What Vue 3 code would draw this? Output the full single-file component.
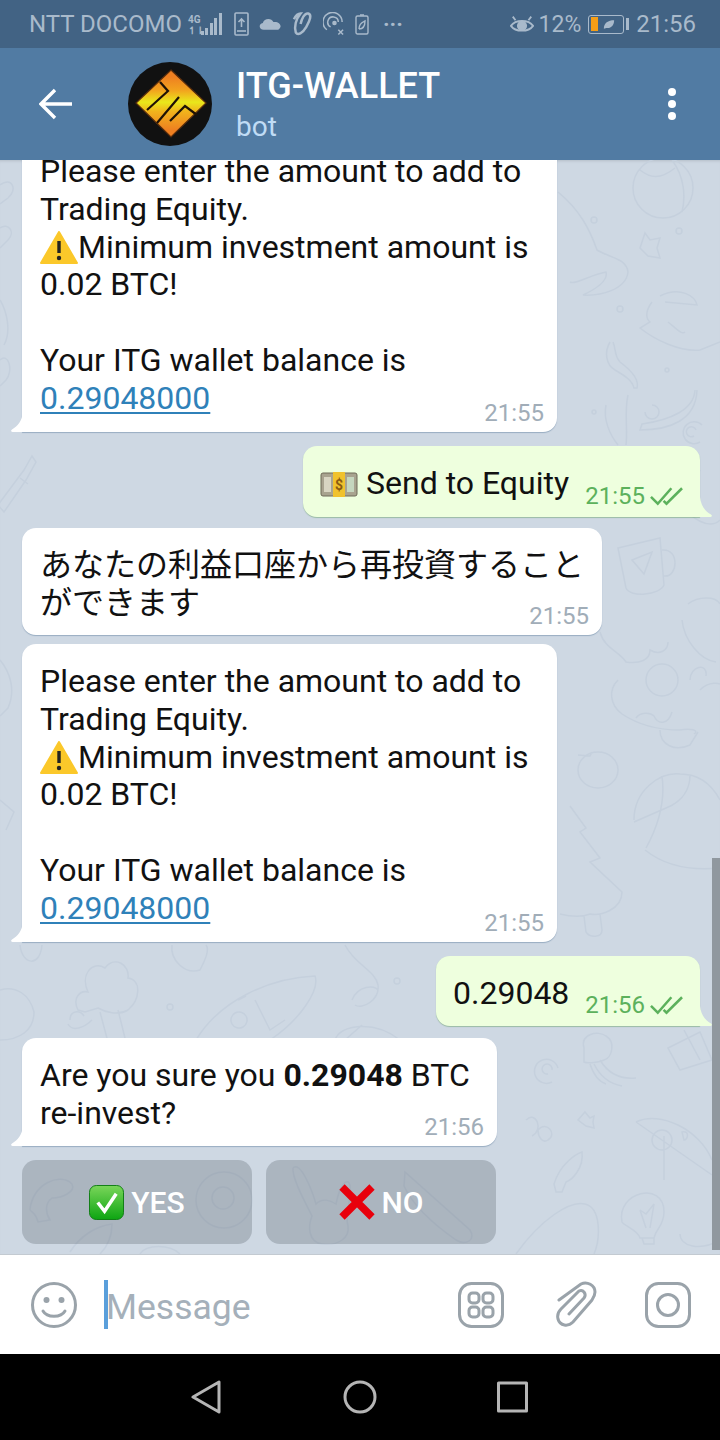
<script setup>
// wallpaper doodles, in page coordinates
const doodles = [
  // top right: ball, star, dino, jar, squiggles
  'M633 188 A30 30 0 1 1 693 188 A30 30 0 1 1 633 188 M640 170 C650 178 660 180 675 168 M672 160 C684 176 686 196 682 212',
  'M645 233 L650 240 L660 238 L657 248 L660 258 L648 256 L640 248 Z',
  'M558 192 C580 210 590 230 597 250 C610 258 626 258 628 272 C626 290 600 296 583 295 C598 288 608 280 606 272 C590 275 575 285 570 282',
  'M660 296 C680 286 695 296 697 305 L665 302 M652 302 C646 310 645 318 650 322 L640 328 C655 340 680 352 700 350 L720 342 M668 322 C678 330 682 335 685 332',
  'M610 342 C604 352 606 365 615 370 C625 376 632 380 634 388 L637 388 C640 378 628 368 620 362 C614 356 616 348 613 342',
  'M695 390 C694 410 670 420 642 424 L640 430 C670 430 696 420 697 390',
  'M700 442 A11 11 0 1 1 702 425 M694 436 A5 5 0 1 1 696 430',
  'M645 412 A7 7 0 1 0 652 405',
  'M606 405 C603 420 610 435 618 445 M628 395 C624 412 628 430 626 445',
  // dots
  'M591 220 a3 3 0 1 0 6 0 a3 3 0 1 0 -6 0 M676 231 a3 3 0 1 0 6 0 a3 3 0 1 0 -6 0 M617 309 a3 3 0 1 0 6 0 a3 3 0 1 0 -6 0 M665 370 a2 2 0 1 0 4 0 a2 2 0 1 0 -4 0 M592 412 a2 2 0 1 0 4 0 a2 2 0 1 0 -4 0',
  // left edge
  'M0 185 C12 176 18 190 8 198 L0 204 M0 228 C8 222 16 232 8 240 L0 248 M0 360 C8 352 14 370 6 380 L0 386',
  'M-2 505 L24 470 L32 456 L36 462 L26 480 L4 512 Z M20 478 L28 484',
  'M0 300 C6 310 12 330 4 345 M0 660 C10 672 16 690 8 708 L0 716 M0 800 L14 812 L6 830',
  // mid right: cup, strawberry
  'M618 548 L660 538 L664 585 C660 595 630 598 626 588 Z M662 550 C680 548 678 578 664 576 M632 560 L652 552 L644 574 Z',
  'M688 604 C698 596 716 596 720 604 M682 620 C684 640 700 660 716 662',
  'M636 500 C660 510 680 500 700 470 M680 500 C690 520 710 530 720 520',
  // donut creature, peach, ball, tree
  'M600 632 C604 648 620 652 626 662 C640 664 650 660 650 650 C660 656 668 650 668 642 M618 680 C608 690 610 705 622 714 C640 726 660 730 680 730 C690 728 700 730 694 734',
  'M646 680 A16 16 0 1 1 678 680 A16 16 0 1 1 646 680 M690 680 C690 666 708 662 706 676 M700 690 C710 680 720 684 720 684',
  'M636 718 C640 712 650 712 654 716 C658 725 668 725 672 712 M660 730 C660 745 675 752 690 745 L698 732',
  'M578 770 A20 18 0 1 1 618 770 A20 18 0 1 1 578 770 M578 755 L590 756 L592 752',
  'M634 820 C634 790 660 772 680 774 C700 774 712 785 720 800 M634 822 L666 808 C686 800 690 785 690 775 M662 776 C664 790 664 815 646 848 M645 850 C670 870 700 870 720 868',
  'M570 806 L586 828 L580 832 L600 858 L590 862 L622 892 C622 910 600 916 590 914 C580 918 568 916 560 914 M584 916 L586 932 C590 938 602 938 602 930 L600 914',
  // below the wallet bubble: cloud tree, rocket, planet
  'M78 1010 C72 998 80 990 88 992 C80 975 92 960 105 968 C115 955 130 965 128 978 C142 980 140 1000 128 1010 C118 1016 105 1012 98 1008 L85 1012 Z M100 1012 L108 1042 M118 1010 L126 1042',
  'M70 1020 C70 1010 80 1010 84 1016 M68 1024 C72 1032 84 1028 92 1020',
  'M196 1040 C220 1000 270 978 315 976 C320 990 300 1020 270 1040 M238 1000 L246 996 M232 1024 A7 7 0 1 1 246 1016 A7 7 0 1 1 232 1024 M255 1000 L270 1030 L285 1020',
  'M0 990 C16 985 30 995 34 1012 C34 1030 20 1040 0 1040',
  'M20 945 C22 965 40 968 42 945 M172 945 C170 960 185 975 200 970 C205 960 210 950 206 945',
  'M345 945 C355 965 375 970 378 985 C380 1000 362 1010 355 1005 M352 1000 C358 985 375 985 378 990 M362 1025 L345 1040 M335 1040 C340 1024 375 1020 400 1040',
  'M167 1007 a3 3 0 1 0 6 0 a3 3 0 1 0 -6 0 M394 981 a3 3 0 1 0 6 0 a3 3 0 1 0 -6 0',
  // jellyfish, swirl, star, pizza
  'M584 1048 C580 1034 598 1030 606 1036 C616 1042 612 1058 604 1060 C600 1062 588 1064 584 1062 Z M600 1060 C606 1070 616 1080 636 1078 M594 1064 C600 1076 610 1084 622 1086 M590 1064 C594 1076 600 1082 606 1084',
  'M552 1082 A12 12 0 1 1 558 1068 M548 1074 A5 5 0 1 1 552 1070',
  'M585 1112 L590 1118 L594 1116 L593 1122 L594 1128 L586 1126 L578 1120 Z',
  'M636 1122 C660 1110 700 1130 712 1160 M636 1122 L712 1175 M652 1140 A10 10 0 1 0 672 1140 A10 10 0 1 0 652 1140 M664 1136 L664 1180 M682 1132 C690 1130 688 1140 684 1140 Z',
  'M668 1048 L700 1032 L712 1060 L680 1070 Z M684 1030 L700 1060',
  // bottom: doodles seen through the keyboard
  'M526 1120 C536 1110 544 1130 532 1136 M538 1130 C546 1120 558 1134 548 1140 C542 1144 538 1136 538 1130',
  'M554 1184 C560 1164 576 1154 582 1152 C584 1168 572 1180 566 1182 L562 1192 L556 1192 Z',
  'M622 1222 C616 1192 664 1180 664 1212 C664 1226 656 1228 654 1238 L640 1238 C638 1230 624 1226 622 1222 M642 1238 L654 1238 L654 1244 L644 1244 Z M640 1210 L646 1228 M654 1204 L650 1228 M640 1210 L646 1214 L654 1204',
  'M516 1254 C540 1220 570 1200 585 1204 C602 1208 600 1240 594 1254',
  'M30 1210 C32 1184 60 1172 72 1184 C76 1192 62 1198 52 1198 C44 1204 46 1214 50 1220 L38 1222 C36 1214 34 1214 30 1210',
  'M196 1200 A28 28 0 1 1 252 1200 A28 28 0 1 1 196 1200 M212 1198 A10 10 0 1 1 234 1198 A10 10 0 1 1 212 1198',
  'M293 1168 C300 1160 312 1190 316 1204 C322 1198 330 1200 336 1204 C340 1184 348 1176 350 1186 C352 1200 344 1214 348 1226 C350 1238 338 1246 322 1244 C308 1242 308 1226 312 1216 C304 1200 292 1178 293 1168',
  'M405 1172 L470 1230 C476 1240 466 1246 456 1240 C436 1226 414 1208 404 1186 Z',
  'M70 1252 C80 1236 96 1226 112 1224 C112 1240 106 1248 100 1254 M140 1254 C146 1244 170 1244 180 1254',
  'M680 1234 C680 1246 700 1252 720 1240'
]
</script>

<template>
  <div class="phone">
    <div class="statusbar">
      <div class="status-left">
        <span class="carrier">NTT DOCOMO</span>
        <span class="net">
          <span class="net-type">4G<br>↿⇂</span>
          <svg width="22" height="24" viewBox="0 0 22 24" fill="#a9bacb">
            <rect x="1" y="19" width="3" height="4" /><rect x="5" y="16" width="3" height="7" />
            <rect x="10" y="11" width="3" height="12" /><rect x="14" y="6" width="3" height="17" />
            <rect x="19" y="1" width="3" height="22" />
          </svg>
        </span>
        <svg width="15" height="24" viewBox="0 0 15 24" fill="none" stroke="#a9bacb" stroke-width="1.6">
          <rect x="1" y="1" width="13" height="22" rx="1" />
          <path d="M7.5 15 V7 M4.5 10 L7.5 7 L10.5 10" />
          <path d="M3 19 H12" />
        </svg>
        <svg width="23" height="14" viewBox="0 0 24 14" fill="#a9bacb">
          <path d="M5 13 C0 13 -1 7 4 6 C5 1 13 0 15 5 C20 4 24 8 22 11 C21 13 20 13 19 13 Z" />
        </svg>
        <svg width="21" height="26" viewBox="0 0 22 26" fill="none" stroke="#a9bacb" stroke-width="2.6">
          <path d="M2 8 C4 4 7 2 9 2 C4 8 2 16 4 22 C6 25 11 23 15 16 C19 9 21 3 17 2 C13 1 10 8 9 13" />
        </svg>
        <svg width="22" height="24" viewBox="0 0 23 24" fill="none" stroke="#a9bacb" stroke-width="1.6">
          <path d="M4 18 A10 10 0 1 1 20 10 M8 15 A5.5 5.5 0 1 1 16 10" />
          <circle cx="12" cy="11" r="1.6" fill="#a9bacb" />
          <path d="M16 18 L21 23 M21 18 L16 23" />
        </svg>
        <svg width="14" height="22" viewBox="0 0 14 22" fill="none" stroke="#a9bacb" stroke-width="1.4">
          <rect x="1" y="3" width="12" height="18" rx="1.5" />
          <path d="M5 2 H9 M4 16 C4 10 8 9 10 8 C10 13 8 16 4 16" />
        </svg>
        <span class="more">···</span>
      </div>
      <div class="status-right">
        <svg width="24" height="22" viewBox="0 0 26 22" fill="none" stroke="#a9bacb" stroke-width="2">
          <path d="M1 13 C6 6 20 6 25 13 C20 20 6 20 1 13 Z" />
          <circle cx="13" cy="13" r="4.5" fill="#a9bacb" />
          <path d="M3 3 L6 7 M23 3 L20 7" />
        </svg>
        <span class="pct">12%</span>
        <span class="battery">
          <span class="battery-fill"></span>
          <svg width="12" height="11" viewBox="0 0 14 12" fill="#a9bacb">
            <path d="M1 11 C1 4 6 1 13 1 C13 7 9 11 4 10 Z" />
          </svg>
        </span>
        <span class="battery-cap"></span>
        <span class="clock">21:56</span>
      </div>
    </div>

    <header class="topbar">
      <svg class="back" width="34" height="32" viewBox="0 0 34 32" fill="none" stroke="#fff" stroke-width="3.4">
        <path d="M33 16 H3 M16 2 L2 16 L16 30" />
      </svg>
      <svg class="avatar" width="84" height="84" viewBox="0 0 84 84">
        <defs>
          <linearGradient id="logo" x1="0" y1="0" x2="0" y2="1">
            <stop offset="0.1" stop-color="#ee7f21" />
            <stop offset="0.3" stop-color="#f2a21e" />
            <stop offset="0.48" stop-color="#e9e81b" />
            <stop offset="0.62" stop-color="#f1b31c" />
            <stop offset="0.9" stop-color="#ee7f21" />
          </linearGradient>
        </defs>
        <circle cx="42" cy="42" r="42" fill="#111" />
        <path d="M43 8 L78 41 L43 75 L8 41 Z" fill="url(#logo)" stroke="#5a2d0c" stroke-width="1.2" />
        <path d="M19 48 L40 29 L32 20 M29 61 L51 35 M42 59 L57 44 L69 53" fill="none" stroke="#1e1206" stroke-width="2.2" />
      </svg>
      <div class="title-block">
        <div class="title">ITG-WALLET</div>
        <div class="subtitle">bot</div>
      </div>
      <div class="dots"><i></i><i></i><i></i></div>
    </header>

    <main class="chat">
      <svg class="doodles" width="720" height="1094" viewBox="0 160 720 1094" fill="none" stroke="#c5d0dd" stroke-width="1.5">
        <path v-for="(d, i) in doodles" :key="i" :d="d" />
      </svg>
      <div class="scrollbar"></div>

      <div class="messages">
        <div class="bubble in long">
          <svg class="tail" width="12" height="20" viewBox="0 0 12 20"><path d="M12 0 V20 H1.5 C0 20 -0.5 18.5 1 17.5 C7 14 11 9 12 0 Z" fill="#fff" /></svg>
          <div>Please enter the amount to add to<br>Trading Equity.</div>
          <div class="warn-line">
            <svg class="emoji" width="38" height="33" viewBox="0 0 38 33">
              <path d="M19 1 L37 32 H1 Z" fill="#fbc82a" stroke="#fbc82a" stroke-width="2" stroke-linejoin="round" />
              <path d="M19 10 V22" stroke="#222" stroke-width="3.4" />
              <circle cx="19" cy="27" r="2.2" fill="#222" />
            </svg>Minimum investment amount is
          </div>
          <div>0.02 BTC!</div>
          <div class="blank"></div>
          <div>Your ITG wallet balance is</div>
          <a class="link">0.29048000</a>
          <span class="time">21:55</span>
        </div>

        <div class="bubble out send">
          <svg class="emoji cash" width="38" height="28" viewBox="0 0 38 28">
            <rect x="1" y="3" width="36" height="23" rx="2" fill="#a8a38f" stroke="#6f6a58" />
            <rect x="4" y="7" width="7" height="15" fill="#d8d5c2" />
            <rect x="27" y="7" width="7" height="15" fill="#c5d6be" />
            <rect x="13" y="2" width="12" height="25" fill="#f0c22d" />
            <text x="19" y="20" font-size="14" font-family="Roboto" font-weight="700" text-anchor="middle" fill="#8a5a10">$</text>
          </svg>
          <span>Send to Equity</span>
          <span class="time">21:55
            <svg width="33" height="20" viewBox="0 0 34 20" fill="none" stroke="#5cb15c" stroke-width="2.6">
              <path d="M1 11 L8 18 L22 2 M14 15 L17 18 L33 2" />
            </svg>
          </span>
          <svg class="tail" width="12" height="20" viewBox="0 0 12 20"><path d="M0 0 V20 H10.5 C12 20 12.5 18.5 11 17.5 C5 14 1 9 0 0 Z" fill="#eeffde" /></svg>
        </div>

        <div class="bubble in jp">
          <div>あなたの利益口座から再投資すること<br>ができます</div>
          <span class="time">21:55</span>
        </div>

        <div class="bubble in long second">
          <svg class="tail" width="12" height="20" viewBox="0 0 12 20"><path d="M12 0 V20 H1.5 C0 20 -0.5 18.5 1 17.5 C7 14 11 9 12 0 Z" fill="#fff" /></svg>
          <div>Please enter the amount to add to<br>Trading Equity.</div>
          <div class="warn-line">
            <svg class="emoji" width="38" height="33" viewBox="0 0 38 33">
              <path d="M19 1 L37 32 H1 Z" fill="#fbc82a" stroke="#fbc82a" stroke-width="2" stroke-linejoin="round" />
              <path d="M19 10 V22" stroke="#222" stroke-width="3.4" />
              <circle cx="19" cy="27" r="2.2" fill="#222" />
            </svg>Minimum investment amount is
          </div>
          <div>0.02 BTC!</div>
          <div class="blank"></div>
          <div>Your ITG wallet balance is</div>
          <a class="link">0.29048000</a>
          <span class="time">21:55</span>
        </div>

        <div class="bubble out amount">
          <span>0.29048</span>
          <span class="time">21:56
            <svg width="33" height="20" viewBox="0 0 34 20" fill="none" stroke="#5cb15c" stroke-width="2.6">
              <path d="M1 11 L8 18 L22 2 M14 15 L17 18 L33 2" />
            </svg>
          </span>
          <svg class="tail" width="12" height="20" viewBox="0 0 12 20"><path d="M0 0 V20 H10.5 C12 20 12.5 18.5 11 17.5 C5 14 1 9 0 0 Z" fill="#eeffde" /></svg>
        </div>

        <div class="bubble in confirm">
          <svg class="tail" width="12" height="20" viewBox="0 0 12 20"><path d="M12 0 V20 H1.5 C0 20 -0.5 18.5 1 17.5 C7 14 11 9 12 0 Z" fill="#fff" /></svg>
          <div>Are you sure you <b>0.29048</b> BTC<br>re-invest?</div>
          <span class="time">21:56</span>
        </div>

        <div class="keyboard">
          <button class="kb-btn">
            <svg width="35" height="35" viewBox="0 0 36 36">
              <defs>
                <linearGradient id="tick" x1="0" y1="0" x2="0" y2="1">
                  <stop offset="0" stop-color="#7ad65a" />
                  <stop offset="1" stop-color="#0da512" />
                </linearGradient>
              </defs>
              <rect x="0.5" y="0.5" width="35" height="35" rx="7" fill="url(#tick)" stroke="#0f7d14" />
              <path d="M9 18 L16 27 L28 9" fill="none" stroke="#fff" stroke-width="3.6" />
            </svg>
            YES
          </button>
          <button class="kb-btn">
            <svg width="36" height="36" viewBox="0 0 36 36" stroke="#e8000c" stroke-width="7.5">
              <path d="M3 3 L33 33 M33 3 L3 33" />
            </svg>
            NO
          </button>
        </div>
      </div>
    </main>

    <footer class="composer">
      <svg class="ic smile" width="48" height="48" viewBox="0 0 48 48" fill="none" stroke="#9aa3aa" stroke-width="3">
        <circle cx="24" cy="24" r="21.5" />
        <path d="M13 30 C17 37 31 37 35 30" stroke-linecap="round" />
        <circle cx="16.5" cy="19" r="3" fill="#9aa3aa" stroke="none" />
        <circle cx="31.5" cy="19" r="3" fill="#9aa3aa" stroke="none" />
      </svg>
      <div class="input"><span class="caret"></span><span class="placeholder">Message</span></div>
      <svg class="ic" width="46" height="46" viewBox="0 0 46 46" fill="none" stroke="#9aa3aa" stroke-width="3">
        <rect x="1.5" y="1.5" width="43" height="43" rx="12" />
        <rect x="11" y="11" width="10" height="10" rx="3.5" /><rect x="25" y="11" width="10" height="10" rx="3.5" />
        <rect x="11" y="25" width="10" height="10" rx="3.5" /><rect x="25" y="25" width="10" height="10" rx="3.5" />
      </svg>
      <svg class="ic clip" width="41" height="47" viewBox="0 0 41 47" fill="none" stroke="#9aa3aa" stroke-width="3" stroke-linecap="round">
        <path d="M3 19 L25 3 C31 0 39 4 39 11 C39 14 38 16 36 19 L17 41 C12 46 4 45 2 38 C1 34 2 31 5 28 L23 10 C27 8 31 13 28 17 L13 33" />
      </svg>
      <svg class="ic" width="46" height="46" viewBox="0 0 46 46" fill="none" stroke="#9aa3aa" stroke-width="3">
        <rect x="1.5" y="1.5" width="43" height="43" rx="12" />
        <circle cx="23" cy="23" r="10.5" />
      </svg>
    </footer>

    <nav class="navbar">
      <svg width="32" height="34" viewBox="0 0 32 34" fill="none" stroke="#b5b5b5" stroke-width="3" stroke-linejoin="round">
        <path d="M28 2 V32 L2 17 Z" />
      </svg>
      <svg width="34" height="34" viewBox="0 0 34 34" fill="none" stroke="#b5b5b5" stroke-width="3">
        <circle cx="17" cy="17" r="15" />
      </svg>
      <svg width="32" height="32" viewBox="0 0 32 32" fill="none" stroke="#b5b5b5" stroke-width="3" stroke-linejoin="round">
        <rect x="1.5" y="2" width="28" height="28" />
      </svg>
    </nav>
  </div>
</template>

<style scoped>
.phone {
  width: 720px;
  height: 1440px;
  display: flex;
  flex-direction: column;
  overflow: hidden;
  font-family: Roboto, "Noto Sans CJK JP", sans-serif;
  color: #111;
}

.statusbar {
  height: 48px;
  flex: none;
  background: #426384;
  color: #a9bacb;
  display: flex;
  align-items: center;
  justify-content: space-between;
  padding: 0 24px 0 29px;
  box-sizing: border-box;
}

.status-left,
.status-right {
  display: flex;
  align-items: center;
}

.carrier {
  font-size: 24px;
  margin-right: 6px;
}

.net {
  display: flex;
  align-items: flex-end;
  margin-right: 12px;
}

.net-type {
  font-size: 10px;
  line-height: 11px;
  font-weight: 700;
  width: 12px;
  white-space: nowrap;
}

.status-left > svg {
  margin-right: 10px;
}

.more {
  font-size: 22px;
  font-weight: 700;
  margin-left: 4px;
}

.pct {
  font-size: 23px;
  margin: 0 7px 0 5px;
}

.battery {
  width: 30px;
  height: 13px;
  border: 1.5px solid #a9bacb;
  border-radius: 3px;
  padding: 2px;
  display: flex;
  align-items: center;
}

.battery-fill {
  width: 7px;
  height: 14px;
  background: #f59e16;
  margin-right: 5px;
}

.battery-cap {
  width: 3px;
  height: 12px;
  background: #a9bacb;
  margin: 0 7px 0 2px;
}

.clock {
  font-size: 24px;
}

.topbar {
  height: 112px;
  flex: none;
  background: #517ba3;
  display: flex;
  align-items: center;
  padding: 0 44px 0 39px;
  box-sizing: border-box;
  position: relative;
  z-index: 2;
  color: #fff;
}

.back {
  margin-right: 55px;
}

.avatar {
  margin-right: 24px;
}

.title-block {
  flex: 1;
  margin-top: 2px;
}

.title {
  font-size: 36px;
  font-weight: 500;
  line-height: 44px;
}

.subtitle {
  font-size: 28px;
  line-height: 38px;
  color: #c0dcf5;
}

.dots {
  display: flex;
  flex-direction: column;
  gap: 4px;
}

.dots i {
  width: 8px;
  height: 8px;
  border-radius: 50%;
  background: #fff;
}

.chat {
  flex: 1;
  min-height: 0;
  position: relative;
  overflow: hidden;
  background: #ced8e3;
  box-shadow: inset 0 3px 3px -2px rgba(0, 0, 0, 0.12);
}

.doodles {
  position: absolute;
  left: 0;
  top: 0;
}

.scrollbar {
  position: absolute;
  right: 0;
  top: 698px;
  width: 8px;
  height: 392px;
  background: #90989f;
}

.messages {
  position: relative;
  height: 100%;
  display: flex;
  flex-direction: column;
  justify-content: flex-end;
  box-sizing: border-box;
  padding-bottom: 10px;
  font-size: 32px;
  line-height: 37.8px;
}

.bubble {
  flex: none;
  position: relative;
  border-radius: 14px;
  box-sizing: border-box;
  box-shadow: 0 1px 1px rgba(86, 119, 153, 0.45);
}

.bubble.in {
  background: #fff;
  align-self: flex-start;
  margin-left: 22px;
  padding: 19px 0 14px 18px;
}

.bubble.out {
  background: #eeffde;
  align-self: flex-end;
  margin-right: 20px;
  height: 71px;
  display: flex;
  align-items: center;
  padding: 5px 0 0 17px;
  border-bottom-right-radius: 0;
  box-shadow: 0 1px 1px rgba(90, 150, 90, 0.45);
}

.bubble .tail {
  position: absolute;
  bottom: 0;
}

.bubble.in .tail {
  left: -11.5px;
}

.bubble.out .tail {
  right: -11.5px;
}

.long,
.confirm {
  border-bottom-left-radius: 0;
}

.long {
  width: 535px;
  height: 298px;
  margin-bottom: 14px;
}

.second {
  margin-top: 9px;
}

.send {
  width: 397px;
  margin-bottom: 11px;
}

.cash {
  margin-right: 8px;
}

.jp {
  width: 580px;
  height: 107px;
}

.bubble.out.amount {
  width: 264px;
  height: 70px;
  margin-bottom: 12px;
}

.confirm {
  width: 475px;
  height: 108px;
  margin-bottom: 14px;
}

.warn-line {
  display: flex;
  align-items: center;
  white-space: nowrap;
}

.emoji {
  flex: none;
}

.blank {
  height: 37.8px;
}

.link {
  color: #2f81b9;
  text-decoration: underline;
  text-underline-offset: 3px;
  text-decoration-thickness: 2px;
}

.time {
  position: absolute;
  right: 13px;
  bottom: 5px;
  font-size: 24px;
  line-height: 28px;
  color: #a1adb8;
  display: flex;
  align-items: center;
  gap: 5px;
}

.out .time {
  color: #5cb15c;
  right: 17px;
  bottom: 7px;
}

.keyboard {
  display: flex;
  gap: 14px;
  margin-left: 22px;
}

.kb-btn {
  width: 230px;
  height: 84px;
  border: 0;
  border-radius: 14px;
  background: rgba(90, 100, 110, 0.3);
  color: #fff;
  font-family: inherit;
  font-size: 30px;
  font-weight: 500;
  display: flex;
  align-items: center;
  justify-content: center;
  gap: 7px;
  padding: 0;
}

.composer {
  height: 100px;
  flex: none;
  background: #fff;
  display: flex;
  align-items: center;
  padding: 0 29px 0 30px;
  box-sizing: border-box;
  border-top: 1px solid #c3cad1;
}

.smile {
  margin-right: 26px;
}

.input {
  flex: 1;
  display: flex;
  align-items: center;
}

.caret {
  width: 4px;
  height: 49px;
  background: #5a9fdb;
}

.placeholder {
  font-size: 35.5px;
  color: #a5b0ba;
  margin: 5px 0 0 -2px;
}

.clip {
  margin: 0 48px 0 52px;
}

.navbar {
  height: 86px;
  flex: none;
  background: #000;
  display: flex;
  align-items: center;
  justify-content: center;
  gap: 120px;
}
</style>

<style>
body {
  background: #000;
}
</style>
